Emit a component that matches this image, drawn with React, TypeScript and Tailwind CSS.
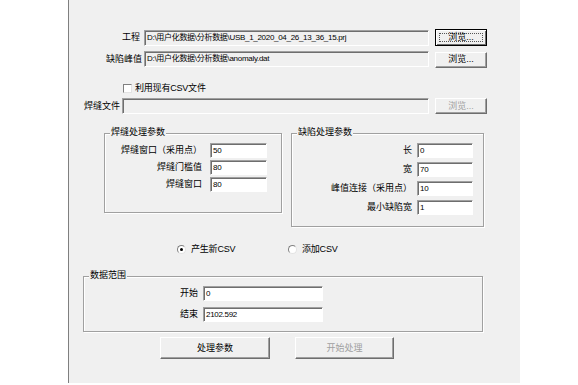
import React from 'react';

const font = "font-['Liberation_Sans','Noto_Sans_CJK_SC',sans-serif]";

// sunken edit box (classic win32 look)
function Edit({ value, w, h = 15, white = false }: { value?: string; w: number; h?: number; white?: boolean }) {
    return (
        <div
            className={`box-border flex items-center pl-[2px] text-[8px] tracking-[-0.3px] leading-none text-black whitespace-nowrap overflow-hidden border border-t-[#a0a0a0] border-l-[#a0a0a0] border-r-white border-b-white shadow-[inset_1px_1px_0_#6e6e6e] ${white ? 'bg-white' : 'bg-[#f0f0f0]'}`}
            style={{ width: w, height: h }}
        >
            {value}
        </div>
    );
}

function Button({ label, w, h, disabled = false, focused = false }: { label: string; w: number; h: number; disabled?: boolean; focused?: boolean }) {
    return (
        <div
            className={`box-border flex items-center justify-center text-[9px] leading-none bg-[#f0f0f0] ${focused
                ? 'border border-black shadow-[inset_1px_1px_0_#fff,inset_-1px_-1px_0_#6e6e6e]'
                : 'border border-t-white border-l-white border-r-[#6e6e6e] border-b-[#6e6e6e] shadow-[inset_-1px_-1px_0_#a0a0a0]'
                } ${disabled ? 'text-[#a0a0a0]' : 'text-black'}`}
            style={{ width: w, height: h }}
        >
            {focused ? (
                <span className="flex items-center justify-center w-[calc(100%-6px)] h-[calc(100%-6px)] border border-dotted border-[#555]">
                    {label}
                </span>
            ) : (
                label
            )}
        </div>
    );
}

function Group({ title, w, h, children }: { title: string; w: number; h: number; children: React.ReactNode }) {
    return (
        <div
            className="relative box-border shrink-0 border border-[#a0a0a0] shadow-[inset_1px_1px_0_#fff,1px_1px_0_#fff]"
            style={{ width: w, height: h }}
        >
            {/* caption sits on the frame */}
            <span className="absolute -top-[6px] left-[5px] px-[1px] bg-[#f0f0f0] text-[9px] leading-none text-black">
                {title}
            </span>
            {children}
        </div>
    );
}

function Field({ label, value, labelW, gap, inputW }: { label: string; value: string; labelW: number; gap: number; inputW: number }) {
    return (
        <div className="flex items-center h-[15px]">
            <span className="text-right text-[9px] leading-none text-black whitespace-nowrap" style={{ width: labelW, marginRight: gap }}>
                {label}
            </span>
            <Edit value={value} w={inputW} white />
        </div>
    );
}

function Radio({ checked }: { checked?: boolean }) {
    return (
        <span className="box-border flex items-center justify-center w-[9px] h-[9px] rounded-full bg-white border border-t-[#808080] border-l-[#808080] border-r-[#e3e3e3] border-b-[#e3e3e3]">
            {checked && <span className="w-[3px] h-[3px] rounded-full bg-black" />}
        </span>
    );
}

export default function App() {
    return (
        <div className={`w-[578px] h-[385px] bg-white flex ${font}`}>
            <div className="w-[68px] shrink-0" />
            <div className="w-[452px] h-[383px] shrink-0 border-l border-[#7f7f7f] bg-[#f0f0f0] flex flex-col">
                {/* 工程 */}
                <div className="flex items-center mt-[29px] h-[17px]">
                    <span className="w-[71px] text-right text-[9px] leading-none text-black">工程</span>
                    <div className="ml-[4px]">
                        <Edit value="D:\用户化数据\分析数据\USB_1_2020_04_26_13_36_15.prj" w={285} h={16} />
                    </div>
                    <div className="ml-[6px]">
                        <Button label="浏览..." w={52} h={17} focused />
                    </div>
                </div>

                {/* 缺陷峰值 */}
                <div className="flex items-center mt-[5px] h-[16px]">
                    <span className="w-[73px] text-right text-[9px] leading-none text-black">缺陷峰值</span>
                    <div className="ml-[2px]">
                        <Edit value="D:\用户化数据\分析数据\anomaly.dat" w={285} h={16} />
                    </div>
                    <div className="ml-[6px] mt-[1px]">
                        <Button label="浏览..." w={52} h={16} />
                    </div>
                </div>

                {/* checkbox */}
                <div className="flex items-center mt-[16px] h-[11px] pl-[54px] gap-[3px]">
                    <span className="box-border w-[9px] h-[9px] bg-white border border-t-[#808080] border-l-[#808080] border-r-[#e3e3e3] border-b-[#e3e3e3]" />
                    <span className="text-[9px] tracking-[-0.2px] leading-none text-black">利用现有CSV文件</span>
                </div>

                {/* 焊缝文件 */}
                <div className="flex items-center mt-[4px] h-[16px]">
                    <span className="w-[51px] text-right text-[9px] leading-none text-black">焊缝文件</span>
                    <div className="ml-[2px]">
                        <Edit w={307} h={16} />
                    </div>
                    <div className="ml-[6px]">
                        <Button label="浏览..." w={52} h={16} disabled />
                    </div>
                </div>

                {/* parameter groups */}
                <div className="flex items-start mt-[19px] pl-[35px]">
                    <Group title="焊缝处理参数" w={178} h={80}>
                        <div className="flex flex-col gap-[2px] pt-[9px]">
                            <Field label="焊缝窗口（采用点）" value="50" labelW={97} gap={8} inputW={57} />
                            <Field label="焊缝门槛值" value="80" labelW={97} gap={8} inputW={57} />
                            <Field label="焊缝窗口" value="80" labelW={97} gap={8} inputW={57} />
                        </div>
                    </Group>
                    <div className="ml-[9px]">
                        <Group title="缺陷处理参数" w={193} h={94}>
                            <div className="flex flex-col gap-[4px] pt-[9px]">
                                <Field label="长" value="0" labelW={120} gap={5} inputW={56} />
                                <Field label="宽" value="70" labelW={120} gap={5} inputW={56} />
                                <Field label="峰值连接（采用点）" value="10" labelW={120} gap={5} inputW={56} />
                                <Field label="最小缺陷宽" value="1" labelW={120} gap={5} inputW={56} />
                            </div>
                        </Group>
                    </div>
                </div>

                {/* radios */}
                <div className="flex items-center mt-[17px] h-[10px] pl-[108px] text-[9px] tracking-[-0.2px] leading-none text-black">
                    <Radio checked />
                    <span className="ml-[5px] w-[97px]">产生新CSV</span>
                    <Radio />
                    <span className="ml-[5px]">添加CSV</span>
                </div>

                {/* 数据范围 */}
                <div className="flex mt-[22px] pl-[14px]">
                    <Group title="数据范围" w={400} h={56}>
                        <div className="flex flex-col gap-[6px] pt-[9px]">
                            <Field label="开始" value="0" labelW={114} gap={5} inputW={120} />
                            <Field label="结束" value="2102.592" labelW={114} gap={5} inputW={120} />
                        </div>
                    </Group>
                </div>

                {/* actions */}
                <div className="flex mt-[5px] pl-[91px] gap-[25px]">
                    <Button label="处理参数" w={110} h={22} />
                    <Button label="开始处理" w={99} h={22} disabled />
                </div>
            </div>
        </div>
    );
}
